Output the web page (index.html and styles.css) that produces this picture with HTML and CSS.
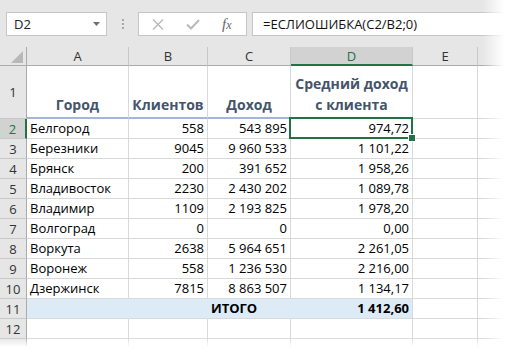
FILE: index.html
```html
<!DOCTYPE html>
<html lang="ru">
<head>
<meta charset="utf-8">
<title>Средний доход с клиента</title>
<link rel="stylesheet" href="styles.css">
</head>
<body>
<div class="app">
  <div class="toolbar">
    <div class="namebox">
      <span>D2</span>
      <svg class="dd" width="7" height="4" viewBox="0 0 7 4"><polygon points="0,0 7,0 3.5,4" fill="#707070"/></svg>
    </div>
    <div class="grip"><span></span></div>
    <div class="fxbox">
      <svg class="ico-x" width="12" height="11" viewBox="0 0 12 11"><path d="M1 0.5 L11 10.5 M11 0.5 L1 10.5" stroke="#b9b9b9" stroke-width="1.4" fill="none"/></svg>
      <svg class="ico-ok" width="14" height="11" viewBox="0 0 14 11"><path d="M1 5.5 L5 9.5 L13 1" stroke="#b9b9b9" stroke-width="2" fill="none"/></svg>
      <span class="fx">f<i>x</i></span>
    </div>
    <div class="formula">=ЕСЛИОШИБКА(C2/B2;0)</div>
  </div>

  <div class="sheet">
    <div class="corner"><svg width="12" height="12" viewBox="0 0 12 12"><polygon points="12,0 12,12 0,12" fill="#b8b8b8"/></svg></div>
    <div class="ch">A</div>
    <div class="ch">B</div>
    <div class="ch">C</div>
    <div class="ch on">D</div>
    <div class="ch">E</div>
    <div class="ch last"></div>

    <div class="rh">1</div>
    <div class="c hd">Город</div>
    <div class="c hd">Клиентов</div>
    <div class="c hd">Доход</div>
    <div class="c hd">Средний доход<br>с клиента</div>
    <div class="c"></div>
    <div class="c"></div>

    <div class="rh on">2</div>
    <div class="c">Белгород</div>
    <div class="c num">558</div>
    <div class="c num">543 895</div>
    <div class="c num active">974,72</div>
    <div class="c"></div>
    <div class="c"></div>

    <div class="rh">3</div>
    <div class="c">Березники</div>
    <div class="c num">9045</div>
    <div class="c num">9 960 533</div>
    <div class="c num">1 101,22</div>
    <div class="c"></div>
    <div class="c"></div>

    <div class="rh">4</div>
    <div class="c">Брянск</div>
    <div class="c num">200</div>
    <div class="c num">391 652</div>
    <div class="c num">1 958,26</div>
    <div class="c"></div>
    <div class="c"></div>

    <div class="rh">5</div>
    <div class="c">Владивосток</div>
    <div class="c num">2230</div>
    <div class="c num">2 430 202</div>
    <div class="c num">1 089,78</div>
    <div class="c"></div>
    <div class="c"></div>

    <div class="rh">6</div>
    <div class="c">Владимир</div>
    <div class="c num">1109</div>
    <div class="c num">2 193 825</div>
    <div class="c num">1 978,20</div>
    <div class="c"></div>
    <div class="c"></div>

    <div class="rh">7</div>
    <div class="c">Волгоград</div>
    <div class="c num">0</div>
    <div class="c num">0</div>
    <div class="c num">0,00</div>
    <div class="c"></div>
    <div class="c"></div>

    <div class="rh">8</div>
    <div class="c">Воркута</div>
    <div class="c num">2638</div>
    <div class="c num">5 964 651</div>
    <div class="c num">2 261,05</div>
    <div class="c"></div>
    <div class="c"></div>

    <div class="rh">9</div>
    <div class="c">Воронеж</div>
    <div class="c num">558</div>
    <div class="c num">1 236 530</div>
    <div class="c num">2 216,00</div>
    <div class="c"></div>
    <div class="c"></div>

    <div class="rh">10</div>
    <div class="c">Дзержинск</div>
    <div class="c num">7815</div>
    <div class="c num">8 863 507</div>
    <div class="c num">1 134,17</div>
    <div class="c"></div>
    <div class="c"></div>

    <div class="rh">11</div>
    <div class="c total"></div>
    <div class="c total"></div>
    <div class="c total strong">ИТОГО</div>
    <div class="c total total-end num strong">1 412,60</div>
    <div class="c"></div>
    <div class="c"></div>

    <div class="rh">12</div>
    <div class="c"></div>
    <div class="c"></div>
    <div class="c"></div>
    <div class="c"></div>
    <div class="c"></div>
    <div class="c"></div>

    <div class="rh"></div>
    <div class="c"></div>
    <div class="c"></div>
    <div class="c"></div>
    <div class="c"></div>
    <div class="c"></div>
    <div class="c"></div>
  </div>

  <div class="fade-right"></div>
  <div class="fade-bottom"></div>
</div>
</body>
</html>
```

FILE: styles.css
```css
* {
  box-sizing: border-box;
}

html,
body {
  margin: 0;
  padding: 0;
  background: #fff;
}

body {
  font-family: "Open Sans", "Noto Sans", sans-serif;
  color: #000;
}

.app {
  position: relative;
  width: 508px;
  height: 348px;
  overflow: hidden;
}

/* ---- formula bar ---- */
.toolbar {
  height: 47px;
  background: #e6e6e6;
  display: flex;
  align-items: flex-start;
  padding: 12px 0 0 6px;
}

.namebox {
  width: 101px;
  height: 24px;
  background: #fff;
  border: 1px solid #c6c6c6;
  display: flex;
  align-items: center;
  justify-content: space-between;
  padding: 0 6px 0 7px;
  font-size: 13px;
  color: #222;
}

.grip {
  width: 31px;
  height: 24px;
  display: flex;
  align-items: center;
  justify-content: center;
}

.grip span {
  width: 2px;
  height: 10px;
  background: repeating-linear-gradient(to bottom, #a8a8a8 0 2px, transparent 2px 4px);
}

.fxbox {
  width: 109px;
  height: 24px;
  background: #fff;
  border: 1px solid #c6c6c6;
  display: flex;
  align-items: center;
  padding-left: 13px;
}

.ico-x {
  margin-right: 22px;
}

.ico-ok {
  margin-right: 22px;
}

.fx {
  font-family: "Liberation Serif", serif;
  font-style: italic;
  font-size: 15px;
  color: #666;
  line-height: 1;
}

.fx i {
  font-size: 12px;
}

.formula {
  flex: 1;
  margin-left: 5px;
  height: 24px;
  background: #fff;
  border: 1px solid #c6c6c6;
  border-right: none;
  padding-left: 10px;
  font-size: 13px;
  line-height: 22px;
  color: #111;
  white-space: nowrap;
}

/* ---- worksheet grid ---- */
.sheet {
  display: grid;
  grid-template-columns: 27px 102px 79px 83px 122px 65px 1fr;
  grid-template-rows: 19px 53px repeat(12, 20px);
}

.corner {
  background: #e6e6e6;
  border-right: 1px solid #ababab;
  border-bottom: 1px solid #ababab;
  display: flex;
  align-items: flex-end;
  justify-content: flex-end;
  padding: 0 3px 2px 0;
}

.ch {
  background: #e6e6e6;
  border-right: 1px solid #c8c8c8;
  border-bottom: 1px solid #ababab;
  display: flex;
  align-items: center;
  justify-content: center;
  font-size: 13px;
  color: #333;
}

.ch.on {
  background: #d2d2d2;
  color: #217346;
  border-bottom: 2px solid #217346;
}

.ch.last {
  border-right: none;
}

.rh {
  background: #e6e6e6;
  border-right: 1px solid #ababab;
  border-bottom: 1px solid #c8c8c8;
  display: flex;
  align-items: center;
  justify-content: center;
  font-size: 13px;
  color: #333;
}

.rh.on {
  background: #d2d2d2;
  color: #217346;
  border-right: 2px solid #217346;
}

.c {
  position: relative;
  border-right: 1px solid #d9d9d9;
  border-bottom: 1px solid #d9d9d9;
  display: flex;
  align-items: flex-end;
  padding: 0 3px 1px;
  font-size: 13px;
  line-height: 18px;
  white-space: nowrap;
}

.num {
  justify-content: flex-end;
}

.hd {
  justify-content: center;
  text-align: center;
  font-weight: 700;
  font-size: 14px;
  line-height: 21px;
  color: #44546a;
  border-bottom: 2px solid #a3b6da;
  padding-bottom: 2px;
}

.total {
  background: #ddebf7;
  border-right-color: #ddebf7;
}

.total-end {
  border-right-color: #d9d9d9;
}

.strong {
  font-weight: 700;
}

/* active cell frame with fill handle */
.active::after {
  content: "";
  position: absolute;
  left: -2px;
  top: -2px;
  right: -1px;
  bottom: -1px;
  border: 2px solid #217346;
}

.active::before {
  content: "";
  position: absolute;
  right: -4px;
  bottom: -4px;
  width: 6px;
  height: 6px;
  background: #217346;
  border: 1px solid #fff;
  z-index: 1;
}

/* soft edges of the view */
.fade-right {
  position: absolute;
  top: 0;
  right: 0;
  width: 26px;
  height: 100%;
  background: linear-gradient(to right, rgba(255, 255, 255, 0), #fff 85%);
}

.fade-bottom {
  position: absolute;
  left: 0;
  bottom: 0;
  width: 100%;
  height: 10px;
  background: linear-gradient(to bottom, rgba(255, 255, 255, 0), #fff 90%);
}
```
